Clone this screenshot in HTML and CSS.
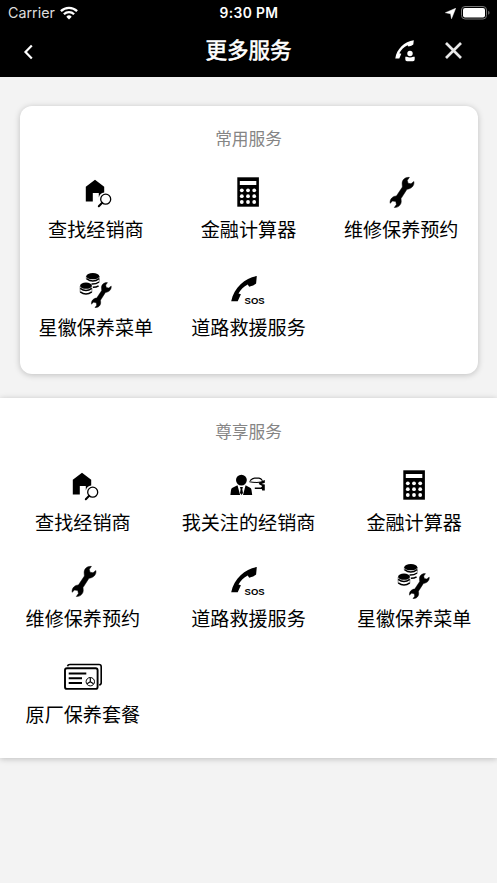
FILE: index.html
```html
<!DOCTYPE html>
<html lang="zh-CN">
<head>
<meta charset="utf-8">
<title>更多服务</title>
<link rel="stylesheet" href="styles.css">
</head>
<body>
<svg class="sprite" aria-hidden="true">
  <symbol id="dealer" viewBox="0 0 40 36">
    <path d="M9.800 12.800L19 5.700l9.200 7.100v5.700a6.500 6.500 0 0 0-5.400 5V19h-6v8.500h-7z"/>
    <circle cx="29.7" cy="25.2" r="5" fill="#fff" stroke="#000" stroke-width="1.300"/>
    <path d="M26.200 28.800l-3.400 3.400" stroke="#000" stroke-width="2" stroke-linecap="round"/>
  </symbol>
  <symbol id="calc" viewBox="0 0 40 36">
    <path d="M9.300 3.300h21.600v29.400H9.300z"/>
    <path fill="#fff" d="M11.800 7h16.500v4H11.800z"/>
    <g fill="#fff">
      <circle cx="13.8" cy="16.3" r="1.9"/><circle cx="20" cy="16.3" r="1.9"/><circle cx="26.200" cy="16.3" r="1.9"/>
      <circle cx="13.8" cy="22.2" r="1.9"/><circle cx="20" cy="22.2" r="1.9"/><circle cx="26.200" cy="22.2" r="1.9"/>
      <circle cx="13.8" cy="28" r="1.9"/><circle cx="20" cy="28" r="1.9"/><circle cx="26.200" cy="28" r="1.9"/>
    </g>
  </symbol>
  <symbol id="wrench" viewBox="0 0 40 36">
    <path stroke="#000" stroke-width=".5" stroke-linejoin="round" d="M28.4 3.400C24 3 20.600 6 21.200 10.600L21.400 13L15.400 22C12 22 8.600 25 9.100 29.300L11.600 27L14.800 27.500L15.400 30.600L13.300 33.500C17.500 33.800 20.700 30.500 20.200 26.600L20 24.600L26 15.200C30 15 33.600 12 32.900 7.500L30 9.800L27 9.200L26.300 6.300Z"/>
  </symbol>
  <symbol id="menu" viewBox="0 0 40 36">
    <ellipse cx="16.800" cy="4.200" rx="6.500" ry="3.100"/>
    <ellipse cx="10" cy="13.700" rx="5.900" ry="3.100"/>
    <g fill="none" stroke="#000" stroke-width="1.500">
      <path d="M10.500 6.700q6.300 4.800 12.600 0M15.500 12.100q4.500.2 7.600-2.100M17 15.300q3.300 0 5.600-1.500"/>
      <path d="M4.200 16.300q5.800 4.500 11.600 0M4.200 19.800q5.800 4.500 11.600 0"/>
    </g>
    <path d="M10.300 4.500v2.500M23.300 4.500v5.500M4.100 14v6M15.900 14v6" stroke="#000" stroke-width=".4"/>
    <use href="#wrench" width="33.200" height="29.900" x="7.900" y="7.800"/>
  </symbol>
  <symbol id="sos" viewBox="0 0 40 36">
    <path d="M28.800 4.100C18 5.500 6 15 3.200 29.300h6.500l3.200-7-2.400-.8C12.700 17.500 15.700 14.700 19.700 12.500l1.500 2.300c3.200-.8 5.300-1.700 6.900-3.300z"/>
    <text class="sos" x="16.600" y="32">SOS</text>
  </symbol>
  <symbol id="advisor" viewBox="0 0 40 36">
    <circle cx="13.400" cy="13.100" r="5.400"/>
    <path d="M2.400 27.900l.6-5q.3-1.700 1.500-2.200l5-2.400 2.600 9.600zM15 27.900l2.600-9.600 4.500 2.400q1.200.6 1.400 2.200l.7 5zM12 20h2.900l-.6 2.200.7 3.700-1.500 2-1.500-2 .6-3.700z"/>
    <path d="M22 13.700q2.500-2.500 4.500-2.600h4.500q2 .2 3.500 2.700" fill="none" stroke="#000" stroke-width="1.100"/>
    <path d="M21.300 14.300q7 1 11.500.3l4-1.500v2.600l-3.200 1.200 3.200.5v6h-2.600l-.4-1.500h-7v-1.500h6.200l1.200-1.400-3.500-1.900.8-1.300q-5.500.3-10.200-.5z"/>
  </symbol>
  <symbol id="package" viewBox="0 0 40 36">
    <g fill="none" stroke="#000" stroke-width="1.900">
      <rect x="2" y="9.300" width="32.600" height="20.600" rx="2"/>
      <path stroke-width="1.600" d="M4.500 7.200q.4-1.700 2.500-1.700h29q2.200 0 2.200 2.200v16q0 1.900-2 2.200"/>
      <path d="M5.700 14.500h17.600M5.700 19.300H19M5.700 24H19"/>
      <circle cx="27.300" cy="22.700" r="4.200" stroke-width="1"/>
      <path d="M27.300 18.600v4.100l-3.200 2.100M27.300 22.700l3.200 2.100" stroke-width="1.200"/>
    </g>
  </symbol>
</svg>

<header class="top">
  <div class="status">
    <div class="status-left">
      <span>Carrier</span>
      <svg width="18" height="14" viewBox="0 0 18 14" fill="none" stroke="#fff" stroke-width="2.300">
        <path d="M.9 5.100a11.600 11.600 0 0 1 16.200 0M3.900 8.200a7.300 7.300 0 0 1 10.200 0"/>
        <path d="M9 13.400L6.300 10.700a3.800 3.800 0 0 1 5.400 0z" fill="#fff" stroke="none"/>
      </svg>
    </div>
    <div class="time">9:30 PM</div>
    <div class="status-right">
      <svg width="11" height="11" viewBox="0 0 11 11"><path fill="#fff" stroke="#fff" stroke-width=".5" d="M10.700.3L6.500 10.700 5.600 5.700.4 4.700z"/></svg>
      <svg width="29" height="14" viewBox="0 0 29 14">
        <rect x=".5" y=".5" width="25" height="12.500" rx="3.500" fill="none" stroke="#777"/>
        <rect x="2" y="2" width="22" height="9.500" rx="2" fill="#fff"/>
        <path d="M27.200 4.800q1.300.6 1.300 2t-1.300 2z" fill="#777"/>
      </svg>
    </div>
  </div>
  <div class="nav">
    <svg class="back" width="10" height="16" viewBox="0 0 10 16"><path d="M8.800 1.500L2.500 8l6.300 6.500" fill="none" stroke="#fff" stroke-width="2.200"/></svg>
    <h1>更多服务</h1>
    <div class="actions">
      <svg width="21" height="22" viewBox="0 0 21 22" fill="#fff">
        <path d="M18.800.2C9.500 1.500 1.500 9 .3 18.500h4l2-4.700-2-.6C6.200 9.500 9 7 12.500 5.200l1 1.400q3.300-.6 4.800-2.200z"/>
        <circle cx="15" cy="13.500" r="2.700"/>
        <path d="M10.300 16.800h1.500q3.200 1.400 6.400 0h1.500v2.500q0 2-1.700 2h-6q-1.700 0-1.700-2z"/>
      </svg>
      <svg width="17" height="17" viewBox="0 0 17 17"><path d="M1 1l15 15M16 1L1 16" fill="none" stroke="#e8e8e8" stroke-width="2.700"/></svg>
    </div>
  </div>
</header>

<main>
  <section class="card common">
    <h2>常用服务</h2>
    <div class="grid">
      <a class="item"><svg class="icon"><use href="#dealer"/></svg><span>查找经销商</span></a>
      <a class="item"><svg class="icon"><use href="#calc"/></svg><span>金融计算器</span></a>
      <a class="item"><svg class="icon"><use href="#wrench"/></svg><span>维修保养预约</span></a>
      <a class="item"><svg class="icon"><use href="#menu"/></svg><span>星徽保养菜单</span></a>
      <a class="item"><svg class="icon"><use href="#sos"/></svg><span>道路救援服务</span></a>
    </div>
  </section>
  <section class="card premium">
    <h2>尊享服务</h2>
    <div class="grid">
      <a class="item"><svg class="icon"><use href="#dealer"/></svg><span>查找经销商</span></a>
      <a class="item"><svg class="icon"><use href="#advisor"/></svg><span>我关注的经销商</span></a>
      <a class="item"><svg class="icon"><use href="#calc"/></svg><span>金融计算器</span></a>
      <a class="item"><svg class="icon"><use href="#wrench"/></svg><span>维修保养预约</span></a>
      <a class="item"><svg class="icon"><use href="#sos"/></svg><span>道路救援服务</span></a>
      <a class="item"><svg class="icon"><use href="#menu"/></svg><span>星徽保养菜单</span></a>
      <a class="item"><svg class="icon"><use href="#package"/></svg><span>原厂保养套餐</span></a>
    </div>
  </section>
</main>
</body>
</html>
```
FILE: styles.css
```css
* { box-sizing: border-box; }
body {
  margin: 0;
  min-height: 883px;
  background: #f3f3f3;
  color: #000;
  font-family: "Noto Sans CJK SC", sans-serif;
}
svg { display: block; }
.sprite { position: absolute; width: 0; height: 0; overflow: visible; }
.sos { font: bold 9.5px "Liberation Sans", sans-serif; }

.top { height: 77px; background: #000; color: #fff; }
.status {
  display: grid;
  grid-template-columns: 1fr auto 1fr;
  align-items: center;
  height: 26px;
  padding: 0 7px 0 8px;
  font: 14.3px/26px Inter, sans-serif;
}
.status-left, .status-right { display: flex; align-items: center; }
.status-left { gap: 5px; color: #ddd; }
.status-right { justify-content: flex-end; gap: 5px; }
.time { font-weight: 600; font-size: 13.8px; letter-spacing: .4px; }
.nav {
  display: grid;
  grid-template-columns: 1fr auto 1fr;
  align-items: center;
  height: 49px;
  padding: 0 35px 0 23px;
}
.back { margin-top: 3px; }
.nav h1 {
  margin: 0 0 3px 12px;
  font-size: 21.5px;
  line-height: 32px;
  font-weight: 400;
  -webkit-text-stroke: .6px #fff;
}
.actions { display: flex; justify-content: flex-end; align-items: center; gap: 29px; }

main { padding-top: 29px; }
.card { background: #fff; box-shadow: 0 1px 6px rgba(0, 0, 0, .22); }
.card h2 {
  margin: 0;
  color: #858585;
  font-size: 16.7px;
  line-height: 26px;
  font-weight: 400;
  text-align: center;
}
.common { height: 268px; margin: 0 19.5px 24px; padding-top: 19px; border-radius: 12px; }
.premium { height: 360px; padding-top: 20px; }
.grid { display: grid; grid-template-columns: repeat(3, 1fr); padding-top: 23px; }
.common .grid { grid-auto-rows: 98px; }
.premium .grid { grid-auto-rows: 96px; }
.item { display: flex; flex-direction: column; align-items: center; gap: 5px; }
.premium .item { gap: 4.5px; }
.icon { width: 40px; height: 36px; }
.item span { font-size: 19.1px; line-height: 28px; white-space: nowrap; }
```
